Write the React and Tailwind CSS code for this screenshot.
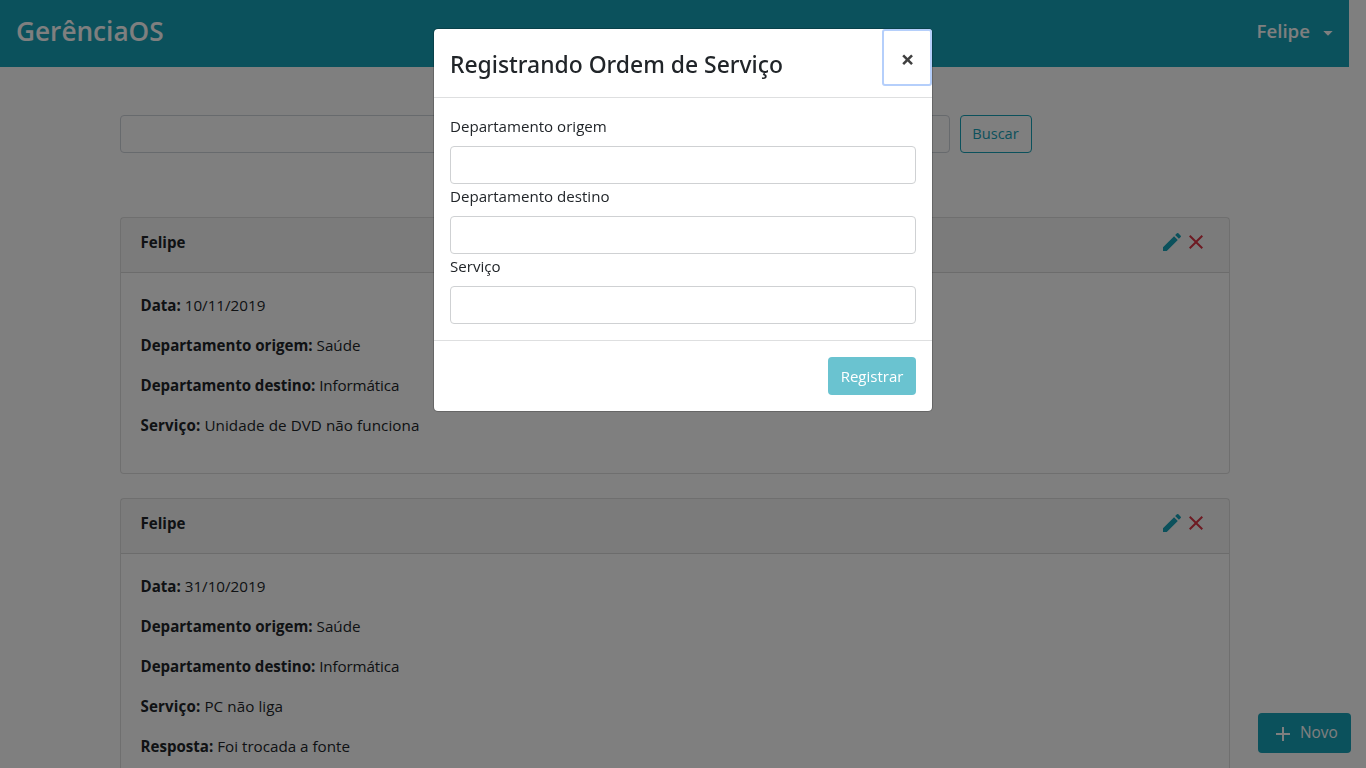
import { MdAdd, MdClose, MdEdit } from 'react-icons/md';

const orders = [
  {
    user: 'Felipe',
    fields: [
      ['Data:', '10/11/2019'],
      ['Departamento origem:', 'Saúde'],
      ['Departamento destino:', 'Informática'],
      ['Serviço:', 'Unidade de DVD não funciona'],
    ],
  },
  {
    user: 'Felipe',
    fields: [
      ['Data:', '31/10/2019'],
      ['Departamento origem:', 'Saúde'],
      ['Departamento destino:', 'Informática'],
      ['Serviço:', 'PC não liga'],
      ['Resposta:', 'Foi trocada a fonte'],
    ],
  },
];

const tracking = {
  'Departamento destino:': ['tracking-[-0.03px]', 'tracking-[-0.12px]'],
  'Serviço:': ['tracking-[0.15px]', 'tracking-[0.07px]'],
};

function Navbar() {
  return (
    <nav className="flex h-[67px] items-center justify-between bg-[#17a2b8] px-4 text-white">
      <a className="pb-[5px] text-[26.2px] leading-10 font-semibold">GerênciaOS</a>
      <button className="flex items-center pb-[5px] text-[18.7px] leading-8 font-semibold">
        Felipe
        <svg className="mt-[5px] ml-[13px]" width="10" height="5" viewBox="0 0 10 5" fill="currentColor">
          <path d="M0.3 0h9.4L5 4.7z" />
        </svg>
      </button>
    </nav>
  );
}

function OrderCard({ order }) {
  return (
    <article className="rounded border border-black/[.125] bg-white">
      <header className="flex h-[55px] items-start justify-between border-b border-black/[.125] bg-black/[.03] pt-3 pr-[20.5px] pl-5">
        <strong className="text-[15.1px] leading-6">{order.user}</strong>
        <div className="flex">
          <MdEdit size={24} className="text-[#17a2b8]" />
          <MdClose size={24} className="text-[#dc3545]" />
        </div>
      </header>
      <div className="p-5">
        {order.fields.map(([label, value]) => {
          const [labelTracking, valueTracking] = tracking[label] ?? ['', ''];
          return (
            <p key={label} className={`mb-4 text-[15.2px] leading-6 ${valueTracking}`}>
              <strong className={`text-[15.1px] ${labelTracking}`}>{label}</strong> {value}
            </p>
          );
        })}
      </div>
    </article>
  );
}

function Field({ label }) {
  return (
    <label className="block text-[15.1px] leading-6">
      {label}
      <input className="mt-2 block h-[38px] w-full rounded border border-[#cfd1d3] bg-white px-3" />
    </label>
  );
}

function OrderModal() {
  return (
    <section className="mt-7 h-fit w-[500px] rounded-[5px] border border-black/20 bg-white bg-clip-padding">
      <header className="flex h-[69px] items-start justify-between border-b border-[#dedfe0] pl-4">
        <h4 className="pt-[18px] font-['Noto_Sans'] text-[22.9px] leading-9 font-medium">Registrando Ordem de Serviço</h4>
        <button className="flex h-[57px] w-[50px] items-center justify-center rounded-[3px] border-2 border-[#b5cffb] pt-[3px] pl-px text-[24px] leading-6 font-bold text-[#404040]">
          ×
        </button>
      </header>
      <div className="p-4">
        <Field label="Departamento origem" />
        <Field label="Departamento destino" />
        <Field label="Serviço" />
      </div>
      <footer className="flex justify-end border-t border-[#dedfe0] p-4">
        <button className="h-[38px] w-[88px] rounded bg-[#6ac3d0] text-[15px] text-white">Registrar</button>
      </footer>
    </section>
  );
}

export default function App() {
  return (
    <div className="h-screen overflow-hidden bg-white pr-[17px] font-['Open_Sans','Noto_Sans',sans-serif] text-[#212529]">
      <Navbar />
      <main className="mx-auto w-[1110px] pt-12">
        <form className="flex gap-2.5">
          <input className="h-[38px] w-[830px] rounded border border-[#ced4da] px-3" />
          <button type="button" className="h-[38px] w-[72px] rounded border border-[#17a2b8] text-[14.6px] text-[#17a2b8]">
            Buscar
          </button>
        </form>
        <div className="mt-16 flex flex-col gap-6">
          {orders.map((order, i) => (
            <OrderCard key={i} order={order} />
          ))}
        </div>
      </main>
      <button className="fixed right-[15px] bottom-[15px] flex h-10 w-[93px] items-center rounded bg-[#17a2b8] pl-[13px] text-[15.4px] text-white">
        <MdAdd size={24} className="mt-0.5 mr-[5px]" />
        Novo
      </button>
      <div className="fixed inset-0 flex justify-center bg-black/50">
        <OrderModal />
      </div>
    </div>
  );
}
